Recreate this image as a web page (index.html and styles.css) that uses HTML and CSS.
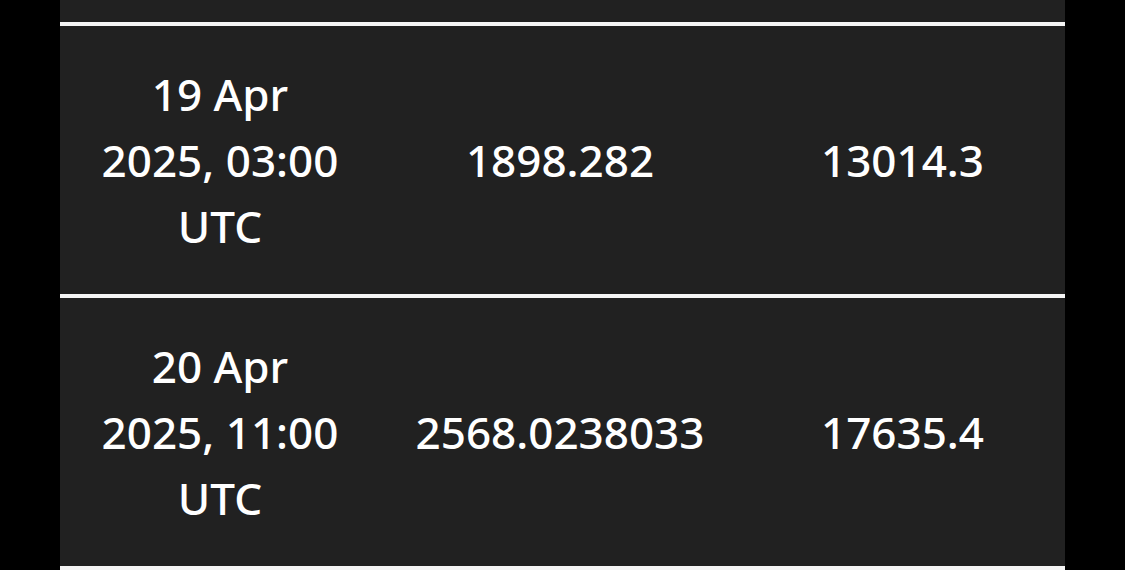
FILE: index.html
```html
<!DOCTYPE html>
<html lang="en">
<head>
<meta charset="utf-8">
<title>Table</title>
<link rel="stylesheet" href="styles.css">
</head>
<body>
<div class="table">
  <div class="row row-tail"></div>
  <div class="row">
    <div class="cell">19 Apr<br>2025, 03:00<br>UTC</div>
    <div class="cell">1898.282</div>
    <div class="cell">13014.3</div>
  </div>
  <div class="row">
    <div class="cell">20 Apr<br>2025, 11:00<br>UTC</div>
    <div class="cell">2568.0238033</div>
    <div class="cell">17635.4</div>
  </div>
</div>
</body>
</html>
```
FILE: styles.css
```css
html, body {
  margin: 0;
  padding: 0;
  background: #000;
}
body {
  font-family: "Noto Sans", "Open Sans", sans-serif;
  color: #fff;
}
.table {
  margin-left: 60px;
  width: 1005px;
  background: #212121;
}
.row {
  display: grid;
  grid-template-columns: 320px 360px 325px;
  height: 268px;
  border-bottom: 4px solid #f5f5f5;
}
.row-tail {
  height: 22px;
}
.cell {
  display: flex;
  align-items: center;
  justify-content: center;
  text-align: center;
  font-size: 44px;
  font-weight: 500;
  line-height: 66px;
}
```
